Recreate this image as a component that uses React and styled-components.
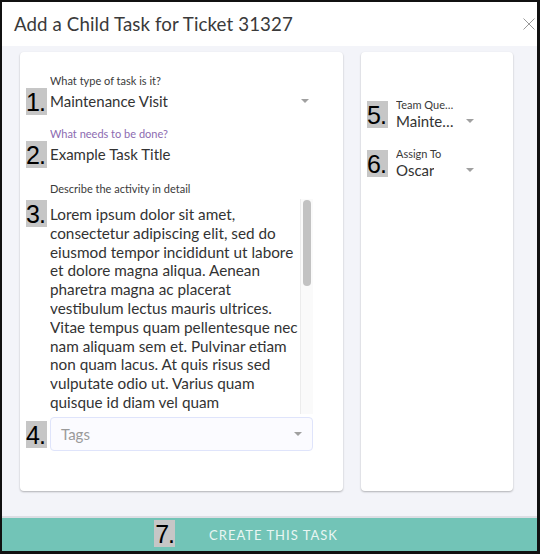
import React from "react";
import styled, { createGlobalStyle } from "styled-components";

const Global = createGlobalStyle`
  html, body { margin: 0; padding: 0; background: #fff; }
  body { font-family: Lato, "Noto Sans", sans-serif; color: #333; }
  * { box-sizing: border-box; }
`;

const Frame = styled.div`
  width: 540px;
  height: 554px;
  border-style: solid;
  border-color: #111;
  border-width: 2px 3px 3px 2px;
  display: flex;
  flex-direction: column;
  background: #fff;
`;

const Header = styled.header`
  height: 44px;
  flex: none;
  display: flex;
  align-items: center;
  justify-content: space-between;
  padding: 0 2px 0 12px;
  background: #fff;
`;

const Title = styled.h1`
  margin: 0;
  font-size: 18.7px;
  font-weight: 400;
  color: #3a3a3a;
  letter-spacing: 0.1px;
`;

const Close = styled.button`
  width: 12px;
  height: 12px;
  padding: 0;
  border: 0;
  background: none;
  display: flex;
`;

const Body = styled.main`
  flex: 1;
  display: flex;
  gap: 18px;
  padding: 6px 24px 25px 18px;
  background: #f3f4f9;
  border-bottom: 2px solid #dcdee4;
`;

const Card = styled.section`
  width: ${(p) => p.$w}px;
  flex: none;
  background: #fff;
  border-radius: 4px;
  box-shadow: 0 1px 2px rgba(0, 0, 0, 0.28);
  padding: ${(p) => p.$pad};
  display: flex;
  flex-direction: column;
  gap: ${(p) => p.$gap}px;
`;

const Field = styled.div`
  display: grid;
  grid-template-columns: 21px ${(p) => p.$w}px;
  column-gap: ${(p) => p.$gap}px;
  align-items: center;
  margin-top: ${(p) => p.$mt || 0}px;
`;

const Badge = styled.span`
  grid-column: 1;
  grid-row: ${(p) => (p.$span ? "1 / 3" : "2")};
  align-self: ${(p) => p.$align || "center"};
  width: 21px;
  height: 27px;
  background: #c6c6c6;
  color: #000;
  font-family: "Liberation Sans", Arial, sans-serif;
  font-size: 25px;
  line-height: 28px;
  letter-spacing: -1px;
  white-space: nowrap;
  margin-top: ${(p) => p.$mt || 0}px;
`;

const Label = styled.label`
  grid-column: 2;
  grid-row: 1;
  font-size: 11px;
  line-height: 14px;
  color: ${(p) => (p.$accent ? "#8c6bb1" : "#3a3a3a")};
  white-space: nowrap;
  overflow: hidden;
  text-overflow: ellipsis;
  max-width: ${(p) => (p.$max ? p.$max + "px" : "none")};
`;

const Select = styled.div`
  grid-column: 2;
  grid-row: 2;
  height: ${(p) => p.$h}px;
  display: flex;
  align-items: center;
  justify-content: space-between;
  padding-right: 4px;
  margin-top: ${(p) => p.$mt || 0}px;
`;

const Value = styled.span`
  font-size: 15px;
  color: #333;
  white-space: nowrap;
  overflow: hidden;
  text-overflow: ellipsis;
  max-width: ${(p) => (p.$max ? p.$max + "px" : "none")};
`;

const Caret = styled.span`
  width: 0;
  height: 0;
  border-left: 4px solid transparent;
  border-right: 4px solid transparent;
  border-top: 4px solid #a0a0a0;
  flex: none;
`;

const TextBox = styled.div`
  grid-column: 2;
  grid-row: 2;
  height: 215px;
  margin-top: 3px;
  display: flex;
  justify-content: space-between;
`;

const Text = styled.div`
  width: 250px;
  height: 100%;
  overflow: hidden;
  padding-top: 6px;
  font-size: 15.3px;
  line-height: 18.8px;
  color: #333;
`;

const Track = styled.div`
  width: 13px;
  height: 100%;
  background: #fafafa;
  border-left: 1px solid #ececec;
  padding: 1px 2px 0 2px;
`;

const Thumb = styled.div`
  height: 86px;
  background: #c2c2c2;
  border-radius: 4px;
`;

const TagsBox = styled.div`
  grid-column: 2;
  grid-row: 2;
  height: 34px;
  border: 1px solid #dfe4fb;
  border-radius: 4px;
  background: #fbfbff;
  display: flex;
  align-items: center;
  justify-content: space-between;
  padding: 0 10px;
  color: #9a9a9a;
  font-size: 15px;
`;

const Footer = styled.button`
  height: 33px;
  flex: none;
  border: 0;
  background: #72c4b7;
  display: flex;
  align-items: center;
  justify-content: center;
  padding: 0 0 0 8px;
  font-family: Lato, "Noto Sans", sans-serif;
`;

const FooterLabel = styled.span`
  position: relative;
  font-size: 13px;
  letter-spacing: 1px;
  color: #e9f6f3;
`;

const FooterBadge = styled.span`
  position: absolute;
  right: calc(100% + 34px);
  top: -7px;
  width: 21px;
  height: 27px;
  background: #c6c6c6;
  color: #000;
  font-family: "Liberation Sans", Arial, sans-serif;
  font-size: 25px;
  line-height: 28px;
  letter-spacing: -1px;
`;

const lorem =
  "Lorem ipsum dolor sit amet, consectetur adipiscing elit, sed do eiusmod tempor incididunt ut labore et dolore magna aliqua. Aenean pharetra magna ac placerat vestibulum lectus mauris ultrices. Vitae tempus quam pellentesque nec nam aliquam sem et. Pulvinar etiam non quam lacus. At quis risus sed vulputate odio ut. Varius quam quisque id diam vel quam pellentesque elit ullamcorper dignissim cras tincidunt. Integer feugiat scelerisque varius morbi enim nunc faucibus a pellentesque.";

export default function App() {
  return (
    <>
      <Global />
      <Frame>
        <Header>
          <Title>Add a Child Task for Ticket 31327</Title>
          <Close aria-label="Close">
            <svg width="12" height="12" viewBox="0 0 12 12">
              <path d="M0.5 0.5 L11.5 11.5 M11.5 0.5 L0.5 11.5" stroke="#9a9a9a" strokeWidth="1" />
            </svg>
          </Close>
        </Header>
        <Body>
          <Card $w={323} $pad="22px 0 0 6px" $gap={12}>
            <Field $w={263} $gap={3}>
              <Label>What type of task is it?</Label>
              <Badge>1.</Badge>
              <Select $h={27} $mt={-2}>
                <Value>Maintenance Visit</Value>
                <Caret />
              </Select>
            </Field>
            <Field $w={263} $gap={3}>
              <Label $accent>What needs to be done?</Label>
              <Badge>2.</Badge>
              <Select $h={27} $mt={-2}>
                <Value>Example Task Title</Value>
              </Select>
            </Field>
            <Field $w={263} $gap={3} $mt={2}>
              <Label>Describe the activity in detail</Label>
              <Badge $align="start" $mt={4}>3.</Badge>
              <TextBox>
                <Text>{lorem}</Text>
                <Track>
                  <Thumb />
                </Track>
              </TextBox>
            </Field>
            <Field $w={263} $gap={3} $mt={-9}>
              <Badge>4.</Badge>
              <TagsBox>
                <span>Tags</span>
                <Caret />
              </TagsBox>
            </Field>
          </Card>
          <Card $w={152} $pad="46px 0 0 6px" $gap={17}>
            <Field $w={82} $gap={8}>
              <Badge $span>5.</Badge>
              <Label $max={60}>Team Queue</Label>
              <Select $h={18}>
                <Value $max={62}>Maintenance Visit</Value>
                <Caret />
              </Select>
            </Field>
            <Field $w={82} $gap={8}>
              <Badge $span>6.</Badge>
              <Label>Assign To</Label>
              <Select $h={18}>
                <Value>Oscar</Value>
                <Caret />
              </Select>
            </Field>
          </Card>
        </Body>
        <Footer>
          <FooterLabel>
            <FooterBadge>7.</FooterBadge>
            CREATE THIS TASK
          </FooterLabel>
        </Footer>
      </Frame>
    </>
  );
}
